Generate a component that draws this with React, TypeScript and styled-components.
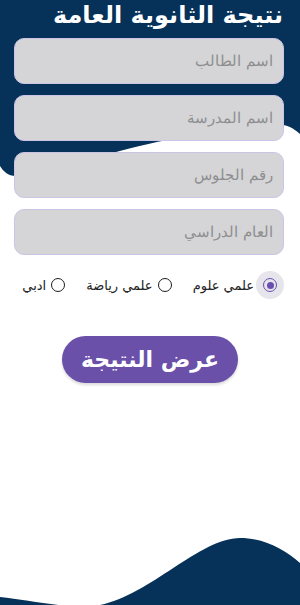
import React, { useState } from "react";
import styled, { createGlobalStyle } from "styled-components";

const GlobalStyle = createGlobalStyle`
  html, body {
    margin: 0;
    padding: 0;
    background: #ffffff;
  }
  * {
    box-sizing: border-box;
  }
`;

const Page = styled.div`
  position: relative;
  width: 300px;
  height: 605px;
  overflow: hidden;
  background: #ffffff;
  font-family: "DejaVu Sans", "Noto Sans", sans-serif;
  direction: rtl;
`;

const Backdrop = styled.svg`
  position: absolute;
  left: 0;
  top: 0;
  width: 300px;
  height: 605px;
  z-index: 0;
`;

const Content = styled.div`
  position: relative;
  z-index: 1;
  display: flex;
  flex-direction: column;
  padding: 0 16px 0 14px;
`;

const Title = styled.h1`
  margin: 0;
  height: 34px;
  padding-top: 1px;
  font-size: 24px;
  font-weight: 700;
  color: #ffffff;
  text-align: right;
  line-height: 29px;
  margin-right: 1px;
  white-space: nowrap;
`;

const Fields = styled.div`
  display: flex;
  flex-direction: column;
  gap: 11px;
  margin-top: 4px;
`;

const Field = styled.input`
  width: 270px;
  height: 46px;
  border-radius: 10px;
  border: 1px solid #cbc4e6;
  background: #d5d5d7;
  padding: 0 10px 0 12px;
  font-family: inherit;
  font-size: 15px;
  font-weight: 300;
  color: #333;
  direction: rtl;
  text-align: right;
  outline: none;
  &::placeholder {
    color: #8e8e90;
  }
`;

const Options = styled.div`
  display: flex;
  align-items: center;
  margin-top: 16px;
  padding-right: 7px;
  gap: 21px;
`;

const Option = styled.label<{ $gap: number }>`
  display: flex;
  align-items: center;
  flex-shrink: 0;
  gap: ${(p) => p.$gap}px;
  font-size: 13px;
  color: #222;
  white-space: nowrap;
  cursor: pointer;
`;

const RadioWrap = styled.span<{ $on: boolean }>`
  width: 28px;
  height: 28px;
  margin: 0 -7px;
  border-radius: 50%;
  display: flex;
  align-items: center;
  justify-content: center;
  background: ${(p) => (p.$on ? "#e7e5ec" : "transparent")};
`;

const Radio = styled.span<{ $on: boolean }>`
  width: 14px;
  height: 14px;
  border-radius: 50%;
  border: 1.6px solid ${(p) => (p.$on ? "#6a4fb0" : "#1d1d1d")};
  display: flex;
  align-items: center;
  justify-content: center;
  &::after {
    content: "";
    width: 7px;
    height: 7px;
    border-radius: 50%;
    background: ${(p) => (p.$on ? "#6a4fb0" : "transparent")};
  }
`;

const ButtonRow = styled.div`
  display: flex;
  justify-content: center;
  margin-top: 37px;
  margin-left: 2px;
`;

const ShowButton = styled.button`
  width: 176px;
  height: 47px;
  border: none;
  border-radius: 24px;
  background: #6a50a9;
  color: #ffffff;
  font-family: inherit;
  font-size: 22px;
  font-weight: 700;
  box-shadow: 0 2px 3px rgba(0, 0, 0, 0.15);
  cursor: pointer;
`;

const choices = [
  { label: "علمي علوم", gap: 9 },
  { label: "علمي رياضة", gap: 5 },
  { label: "ادبي", gap: 5 },
];

export default function App() {
  const [branch, setBranch] = useState(0);

  return (
    <>
      <GlobalStyle />
      <Page>
        <Backdrop viewBox="0 0 300 605">
          <path
            d="M0,0 H300 V134 C292,127 285,124 276,125 L167,140 C120,149 50,172 16,176 C8,176 3,171 0,166 Z"
            fill="#06325a"
          />
          <path
            d="M0,597 C30,600 70,610 100,605 C150,595 200,538 240,538 C265,538 285,550 300,563 V605 H0 Z"
            fill="#06325a"
          />
        </Backdrop>
        <Content>
          <Title>نتيجة الثانوية العامة</Title>
          <Fields>
            <Field placeholder="اسم الطالب" />
            <Field placeholder="اسم المدرسة" />
            <Field placeholder="رقم الجلوس" />
            <Field placeholder="العام الدراسي" />
          </Fields>
          <Options>
            {choices.map((c, i) => (
              <Option key={c.label} $gap={c.gap} onClick={() => setBranch(i)}>
                <RadioWrap $on={branch === i}>
                  <Radio $on={branch === i} />
                </RadioWrap>
                {c.label}
              </Option>
            ))}
          </Options>
          <ButtonRow>
            <ShowButton>عرض النتيجة</ShowButton>
          </ButtonRow>
        </Content>
      </Page>
    </>
  );
}
